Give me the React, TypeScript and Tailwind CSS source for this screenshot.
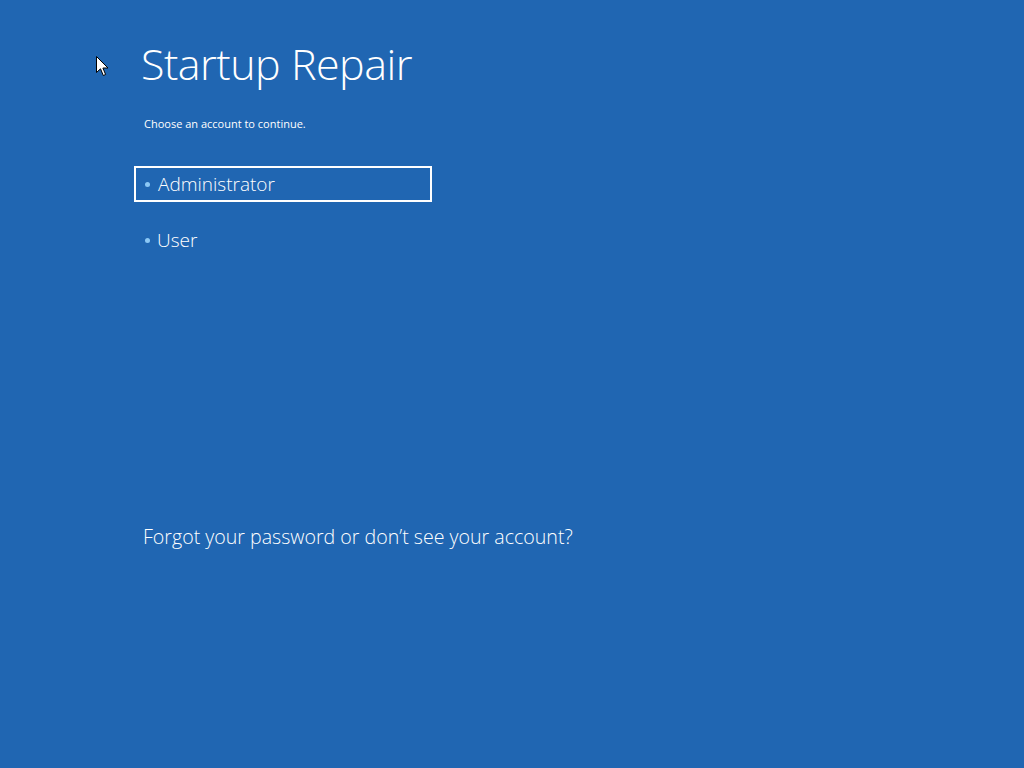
import React from 'react';

const font = { fontFamily: '"Open Sans", "Noto Sans", sans-serif' };

function Cursor() {
  return (
    <svg className="absolute left-[96px] top-[56px]" width="13" height="21" viewBox="0 0 13 21">
      <path d="M0.5 0.5 L0.5 16.5 L4.5 12.8 L7.3 19.5 L9.6 18.5 L6.9 12 L12 12 Z" fill="#fff" stroke="#000" strokeWidth="1" />
    </svg>
  );
}

export default function App() {
  const accounts = ['Administrator', 'User'];
  return (
    <div className="relative w-[1024px] h-[768px] bg-[#2066b2] text-white overflow-hidden" style={font}>
      <Cursor />
      <div className="pl-[134px] pt-[34px]">
        <h1 className="ml-[7px] text-[43px] font-light leading-[60px] tracking-[-0.5px]">Startup Repair</h1>
        <p className="ml-[10px] mt-[22px] text-[11px] leading-[16px]">Choose an account to continue.</p>
        <ul className="mt-[34px] flex flex-col gap-[20px]">
          {accounts.map((a, i) => (
            <li
              key={a}
              className={`flex items-center w-[298px] h-[36px] pl-[9px] gap-[8px] border-2 ${i === 0 ? 'border-white' : 'border-transparent'}`}
            >
              <span className="w-[5px] h-[5px] rounded-full bg-[#8cc8f5]" />
              <span className={`text-[19px] font-light ${i === 0 ? '' : '-ml-[1px]'}`}>{a}</span>
            </li>
          ))}
        </ul>
        <p className="ml-[9px] mt-[264px] text-[19.6px] font-light">Forgot your password or don’t see your account?</p>
      </div>
    </div>
  );
}
